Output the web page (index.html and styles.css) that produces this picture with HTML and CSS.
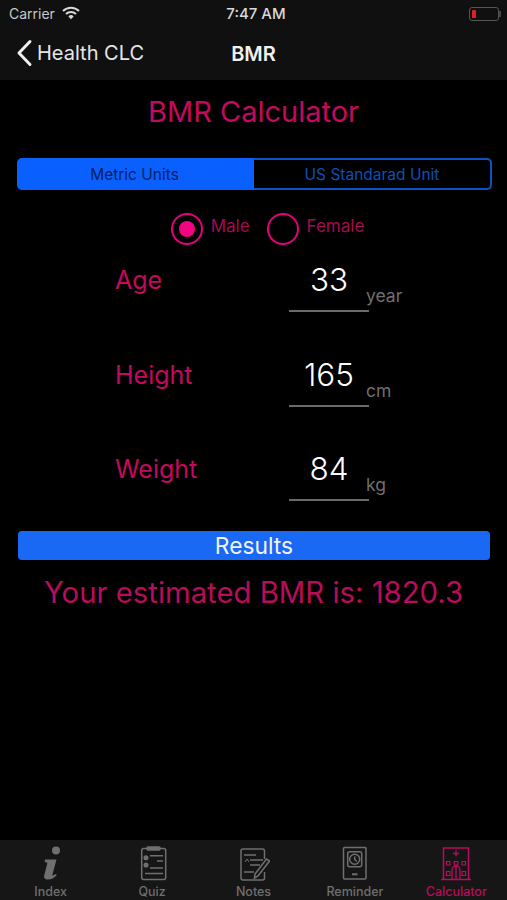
FILE: index.html
```html
<!DOCTYPE html>
<html lang="en">
<head>
    <meta charset="UTF-8">
    <meta name="viewport" content="width=device-width, initial-scale=1.0">
    <title>BMR Calculator</title>
    <link rel="stylesheet" href="styles.css">
</head>
<body>
    <header class="top-bar">
        <div class="status-bar">
            <div class="status-left">
                <span>Carrier</span>
                <svg class="wifi" width="18" height="14" viewBox="0 0 18 14" aria-hidden="true">
                    <path d="M1 5a11.500 11.500 0 0 1 16 0" fill="none" stroke="#d8d8d8" stroke-width="2"/>
                    <path d="M4 8a7.200 7.200 0 0 1 10 0" fill="none" stroke="#d8d8d8" stroke-width="2"/>
                    <path d="M6.400 10.400a3.600 3.600 0 0 1 5.200 0L9 13.200z" fill="#d8d8d8"/>
                </svg>
            </div>
            <span class="status-time">7:47 AM</span>
            <div class="battery"><span class="battery-level"></span></div>
        </div>
        <nav class="nav-bar">
            <a class="back-link">
                <svg width="18" height="28" viewBox="0 0 18 28" aria-hidden="true">
                    <path d="M15 2.500 4 14l11 11.500" fill="none" stroke="#eee" stroke-width="3" stroke-linecap="round" stroke-linejoin="round"/>
                </svg>
                <span>Health CLC</span>
            </a>
            <h1 class="nav-title">BMR</h1>
        </nav>
    </header>

    <main class="content">
        <h2 class="page-title">BMR Calculator</h2>

        <div class="segmented">
            <button type="button" class="segment active">Metric Units</button>
            <button type="button" class="segment">US Standarad Unit</button>
        </div>

        <div class="gender-row">
            <span class="radio checked"></span>
            <span class="radio-label male-label">Male</span>
            <span class="radio"></span>
            <span class="radio-label">Female</span>
        </div>

        <div class="form-rows">
            <div class="form-row">
                <span class="field-label">Age</span>
                <span class="field-value">33</span>
                <span class="field-unit">year</span>
            </div>
            <div class="form-row">
                <span class="field-label">Height</span>
                <span class="field-value">165</span>
                <span class="field-unit">cm</span>
            </div>
            <div class="form-row">
                <span class="field-label">Weight</span>
                <span class="field-value">84</span>
                <span class="field-unit">kg</span>
            </div>
        </div>

        <button type="button" class="results-btn">Results</button>
        <p class="result-text">Your estimated BMR is: 1820.3</p>
    </main>

    <footer class="tab-bar">
        <div class="tab">
            <svg width="30" height="36" viewBox="0 0 30 36" aria-hidden="true">
                <circle cx="20" cy="4.500" r="4" fill="#6f6f6f"/>
                <path d="M9 13.500h11.500l-4 15c-.3 1.200.8 1.300 3.300-.5l.9 1.300c-2.500 2.800-5.200 4.200-8.700 4.200-3.400 0-4.500-1.600-3.700-4.500l2.900-11.300c.3-1.200-.4-1.700-2.600-1.800z" fill="#6f6f6f"/>
            </svg>
            <span>Index</span>
        </div>
        <div class="tab">
            <svg width="30" height="36" viewBox="0 0 30 36" fill="none" stroke="#6f6f6f" stroke-width="1.500" aria-hidden="true">
                <rect x="4.700" y="2.500" width="24" height="31" rx="2"/>
                <rect x="10" y="1" width="13" height="3" rx="1" fill="#6f6f6f"/>
                <circle cx="9" cy="11.700" r="1.800" fill="#6f6f6f"/>
                <circle cx="9" cy="19" r="1.800" fill="#6f6f6f"/>
                <path d="M13 9.700h13M20 15h6M13 22h13M8 27.500h18"/>
            </svg>
            <span>Quiz</span>
        </div>
        <div class="tab">
            <svg width="34" height="36" viewBox="0 0 34 36" fill="none" stroke="#6f6f6f" stroke-width="1.500" aria-hidden="true">
                <path d="M28.500 13V5a2 2 0 0 0-2-2H7a2 2 0 0 0-2 2v27a2 2 0 0 0 2 2h19.500a2 2 0 0 0 2-2v-6"/>
                <path d="M8 9h12M14 14h13M14 19h10M8 26h10" stroke-width="1.400"/>
                <path d="M9 16l2-3 2 3" stroke-width="1"/>
                <path d="M33.500 15 22 30l-3.500 2 .5-4L30.500 13z" stroke-width="1.600"/>
            </svg>
            <span>Notes</span>
        </div>
        <div class="tab">
            <svg width="26" height="36" viewBox="0 0 26 36" fill="none" stroke="#6f6f6f" stroke-width="1.500" aria-hidden="true">
                <rect x="1.500" y="1.500" width="22.500" height="31.500" rx="1"/>
                <rect x="5.700" y="5.700" width="14" height="15" rx="2"/>
                <circle cx="12.700" cy="13.300" r="5"/>
                <path d="M12.700 10.500v3l2 2"/>
                <path d="M10 28.300h5.500" stroke-width="2"/>
            </svg>
            <span>Reminder</span>
        </div>
        <div class="tab current">
            <svg width="32" height="36" viewBox="0 0 32 36" fill="none" stroke="#b80c5c" stroke-width="1.500" aria-hidden="true">
                <path d="M3.500 33V2h25v31M1 33.500h30"/>
                <path d="M16 4.500v6M13 7.500h6" stroke-width="1.300"/>
                <path d="M6.500 15.500H10V19H6.500zM14.300 15.500h3.500V19h-3.500zM22 15.500h3.500V19H22zM6.500 25.500H10v4H6.500zM22 25.500h3.500v4H22z" stroke-width="1.200"/>
                <path d="M12 33v-9a4 4 0 0 1 8 0v9M16 20v13" stroke-width="1.300"/>
            </svg>
            <span>Calculator</span>
        </div>
    </footer>
</body>
</html>
```

FILE: styles.css
```css
* { box-sizing: border-box; }

body {
    margin: 0;
    height: 900px;
    display: flex;
    flex-direction: column;
    overflow: hidden;
    background-color: #000;
    color: #fff;
    font-family: Inter, "Liberation Sans", sans-serif;
}

/* Status and navigation bars */
.top-bar { height: 80px; background-color: #101010; }
.status-bar { height: 27px; padding: 0 9px; display: grid; grid-template-columns: 1fr auto 1fr; align-items: center; font-size: 14px; color: #c8c8c8; }
.status-left { display: flex; align-items: center; gap: 7px; }
.wifi { margin-bottom: 2px; }
.status-time { margin-left: 5px; color: #d8d8d8; font-size: 15px; font-weight: 500; }
.battery { position: relative; justify-self: end; width: 30px; height: 14px; margin-right: -1px; padding: 2px; border: 1px solid #555; border-radius: 3px; }
.battery::after { content: ""; position: absolute; right: -3px; top: 3px; width: 2px; height: 6px; background-color: #444; }
.battery-level { display: block; width: 4px; height: 100%; background-color: #e0201c; border-radius: 1px; }
.nav-bar { height: 53px; position: relative; display: flex; align-items: center; justify-content: center; }
.back-link { position: absolute; left: 15px; top: 12px; display: flex; align-items: center; gap: 4px; font-size: 20px; color: #e6e6e6; }
.nav-title { margin: 0; font-size: 20px; font-weight: 600; color: #f0f0f0; }

/* Main form */
.content { flex: 1; padding: 0 17px; }
.page-title { margin: 13px 0 0; height: 38px; line-height: 38px; text-align: center; font-size: 29px; font-weight: 400; color: #c4095f; }
.segmented { display: flex; height: 32px; margin: 27px -2px 0 0; }
.segment { flex: 1; padding: 0; border: 2px solid #0d52c4; border-left: none; border-radius: 0 5px 5px 0; background: none; font-family: inherit; font-size: 15.500px; color: #0f4fb8; }
.segment.active { flex: 0 0 237px; padding-right: 2px; border: none; border-radius: 5px 0 0 5px; background-color: #0a60ff; color: #04215c; }

.gender-row { display: flex; align-items: center; justify-content: center; height: 32px; margin-top: 23px; padding-left: 28px; }
.radio { width: 32px; height: 32px; border: 2.500px solid #e6007e; border-radius: 50%; display: flex; align-items: center; justify-content: center; }
.radio.checked::after { content: ""; width: 16px; height: 16px; border-radius: 50%; background-color: #f0047f; }
.radio-label { margin: 0 0 6px 8px; font-size: 17px; color: #a50a52; }
.male-label { margin-right: 17px; }

.form-rows { display: flex; flex-direction: column; gap: 40.500px; margin-top: 13px; }
.form-row { display: grid; grid-template-columns: 174px 80px auto; height: 54px; padding-left: 98px; align-items: start; }
.field-label { margin-top: 7px; font-size: 25px; color: #c4095f; }
.field-value { height: 54px; padding-top: 4px; text-align: center; font-size: 31.500px; font-weight: 300; line-height: 36px; border-bottom: 2px solid #6a6a6a; }
.field-unit { margin: 27px 0 0 -3px; font-size: 17.500px; color: #6f6f6f; }

.results-btn { display: block; width: 472px; height: 29px; margin: 30px 0 0 1px; padding: 0; border: none; border-radius: 4px; background-color: #1a69f5; color: #f2f2f2; font-family: inherit; font-size: 22.800px; }
.result-text { margin: 16px 0 0; text-align: center; font-size: 29.300px; line-height: 34px; color: #b80c5c; }

/* Tab bar */
.tab-bar { height: 60px; padding: 6px 0 0; display: grid; grid-template-columns: repeat(5, 1fr); background-color: #161616; }
.tab { display: flex; flex-direction: column; align-items: center; font-size: 12.500px; color: #6f6f6f; }
.tab span { margin-top: 2px; font-weight: 500; white-space: nowrap; }
.tab.current { color: #b80c5c; }
```
